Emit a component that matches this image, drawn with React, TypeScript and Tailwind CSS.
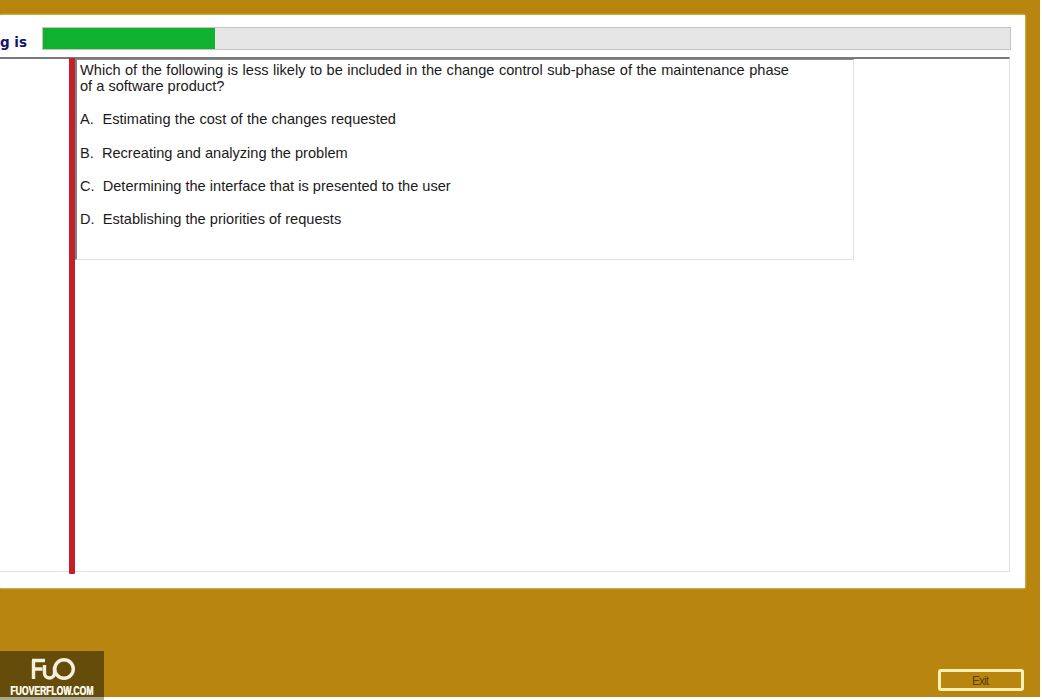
const OPTIONS = [
  { text: "A.  Estimating the cost of the changes requested", cls: "mt-[17px] [word-spacing:0.25px]" },
  { text: "B.  Recreating and analyzing the problem", cls: "mt-[18px]" },
  { text: "C.  Determining the interface that is presented to the user", cls: "mt-[17px]" },
  { text: "D.  Establishing the priorities of requests", cls: "mt-[17px]" },
];

export default function App() {
  return (
    <div className="h-[700px] w-[1042px] overflow-hidden bg-white font-['Liberation_Sans',sans-serif]">
      <div className="flex h-[697px] w-[1040px] flex-col bg-[#b8860f]">
        <div className="mt-[15px] h-[573px] w-[1025px] shrink-0 bg-white shadow-[0_0_2px_#fff3c0]">
          {/* status row */}
          <div className="flex h-[35px] items-end">
            <div className="flex h-full w-[42px] items-end justify-end pr-[15px]">
              <span className="-mb-[2px] whitespace-nowrap font-['DejaVu_Sans',sans-serif] text-[13.5px] font-bold text-[#14146e]">
                g is
              </span>
            </div>
            <div className="h-[23px] w-[969px] border border-[#c4c4c4] bg-[#e6e6e6]">
              <div className="h-full w-[172px] bg-[#0fb12e]" />
            </div>
          </div>

          {/* question area */}
          <div className="mt-[7px] flex h-[515px] w-[1010px] border-t-2 border-r border-b border-t-[#7a7a7a] border-r-[#e2e2e2] border-b-[#e2e2e2]">
            <div className="w-[69px] shrink-0" />
            <div className="-mt-[1px] h-[516px] w-[6px] shrink-0 rounded-b-[1px] bg-[#c5202a]" />
            <div className="h-[201px] w-[779px] shrink-0 border-t border-r border-b border-l-2 border-t-[#8a8a8a] border-r-[#e2e2e2] border-b-[#e2e2e2] border-l-[#808080] pt-[2px] pl-[3px] text-[14.6px] leading-[16px] text-[#1a1a1a]">
              <p>
                <span className="whitespace-nowrap [word-spacing:0.4px]">
                  Which of the following is less likely to be included in the change control sub-phase of the maintenance phase
                </span>
                <br />
                of a software product?
              </p>
              {OPTIONS.map((o) => (
                <p key={o.text} className={`whitespace-pre ${o.cls}`}>
                  {o.text}
                </p>
              ))}
            </div>
          </div>
        </div>

        {/* footer */}
        <div className="flex flex-1 items-end justify-between">
          <div className="flex h-[46px] w-[104px] flex-col items-center overflow-hidden bg-[#664c0a]">
            <svg width="46" height="24" viewBox="0 0 46 24" className="mt-[6px]" fill="none" stroke="#f5efdc" strokeWidth="3.4">
              <path d="M4.5 22V3.5M3 3.5h13M4.5 12h9" />
              <path d="M15.5 8v8a5 5 0 0 0 10 0v-6" />
              <circle cx="35" cy="12" r="9.3" />
            </svg>
            <span className="mt-[3px] scale-x-[0.66] text-[13px] leading-[13px] font-bold whitespace-nowrap text-[#f8f5ea] [text-shadow:0.4px_0_0_#f8f5ea]">
              FUOVERFLOW.COM
            </span>
          </div>
          <button className="mr-[16px] mb-[6px] h-[22px] w-[86px] rounded-[3px] border-[3px] border-[#fdf0b4] pr-[2px] text-center text-[12px] tracking-[-1px] text-[#5e3d08]">
            Exit
          </button>
        </div>
      </div>
      <div className="h-[3px] w-[104px] bg-[#a9a796]" />
    </div>
  );
}
